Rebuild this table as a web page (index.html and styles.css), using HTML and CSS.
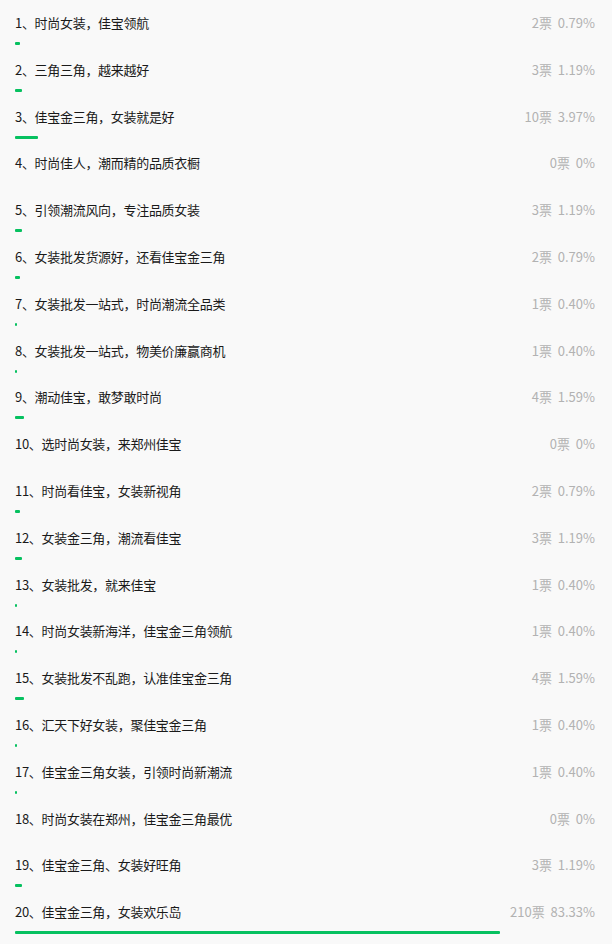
FILE: index.html
```html
<!DOCTYPE html>
<html lang="zh-CN">
<head>
  <meta charset="UTF-8" />
  <title>投票结果</title>
  <link rel="stylesheet" href="styles.css">
</head>
<body>
  <div class="vote-list">
    <div class="vote-item">
      <div class="vote-row"><span class="vote-title">1、时尚女装，佳宝领航</span><span class="vote-count">2票&nbsp;&nbsp;0.79%</span></div>
      <div class="vote-bar"><div class="vote-fill" style="width: 0.79%"></div></div>
    </div>
    <div class="vote-item">
      <div class="vote-row"><span class="vote-title">2、三角三角，越来越好</span><span class="vote-count">3票&nbsp;&nbsp;1.19%</span></div>
      <div class="vote-bar"><div class="vote-fill" style="width: 1.19%"></div></div>
    </div>
    <div class="vote-item">
      <div class="vote-row"><span class="vote-title">3、佳宝金三角，女装就是好</span><span class="vote-count">10票&nbsp;&nbsp;3.97%</span></div>
      <div class="vote-bar"><div class="vote-fill" style="width: 3.97%"></div></div>
    </div>
    <div class="vote-item">
      <div class="vote-row"><span class="vote-title">4、时尚佳人，潮而精的品质衣橱</span><span class="vote-count">0票&nbsp;&nbsp;0%</span></div>
      <div class="vote-bar"></div>
    </div>
    <div class="vote-item">
      <div class="vote-row"><span class="vote-title">5、引领潮流风向，专注品质女装</span><span class="vote-count">3票&nbsp;&nbsp;1.19%</span></div>
      <div class="vote-bar"><div class="vote-fill" style="width: 1.19%"></div></div>
    </div>
    <div class="vote-item">
      <div class="vote-row"><span class="vote-title">6、女装批发货源好，还看佳宝金三角</span><span class="vote-count">2票&nbsp;&nbsp;0.79%</span></div>
      <div class="vote-bar"><div class="vote-fill" style="width: 0.79%"></div></div>
    </div>
    <div class="vote-item">
      <div class="vote-row"><span class="vote-title">7、女装批发一站式，时尚潮流全品类</span><span class="vote-count">1票&nbsp;&nbsp;0.40%</span></div>
      <div class="vote-bar"><div class="vote-fill" style="width: 0.40%"></div></div>
    </div>
    <div class="vote-item">
      <div class="vote-row"><span class="vote-title">8、女装批发一站式，物美价廉赢商机</span><span class="vote-count">1票&nbsp;&nbsp;0.40%</span></div>
      <div class="vote-bar"><div class="vote-fill" style="width: 0.40%"></div></div>
    </div>
    <div class="vote-item">
      <div class="vote-row"><span class="vote-title">9、潮动佳宝，敢梦敢时尚</span><span class="vote-count">4票&nbsp;&nbsp;1.59%</span></div>
      <div class="vote-bar"><div class="vote-fill" style="width: 1.59%"></div></div>
    </div>
    <div class="vote-item">
      <div class="vote-row"><span class="vote-title">10、选时尚女装，来郑州佳宝</span><span class="vote-count">0票&nbsp;&nbsp;0%</span></div>
      <div class="vote-bar"></div>
    </div>
    <div class="vote-item">
      <div class="vote-row"><span class="vote-title">11、时尚看佳宝，女装新视角</span><span class="vote-count">2票&nbsp;&nbsp;0.79%</span></div>
      <div class="vote-bar"><div class="vote-fill" style="width: 0.79%"></div></div>
    </div>
    <div class="vote-item">
      <div class="vote-row"><span class="vote-title">12、女装金三角，潮流看佳宝</span><span class="vote-count">3票&nbsp;&nbsp;1.19%</span></div>
      <div class="vote-bar"><div class="vote-fill" style="width: 1.19%"></div></div>
    </div>
    <div class="vote-item">
      <div class="vote-row"><span class="vote-title">13、女装批发，就来佳宝</span><span class="vote-count">1票&nbsp;&nbsp;0.40%</span></div>
      <div class="vote-bar"><div class="vote-fill" style="width: 0.40%"></div></div>
    </div>
    <div class="vote-item">
      <div class="vote-row"><span class="vote-title">14、时尚女装新海洋，佳宝金三角领航</span><span class="vote-count">1票&nbsp;&nbsp;0.40%</span></div>
      <div class="vote-bar"><div class="vote-fill" style="width: 0.40%"></div></div>
    </div>
    <div class="vote-item">
      <div class="vote-row"><span class="vote-title">15、女装批发不乱跑，认准佳宝金三角</span><span class="vote-count">4票&nbsp;&nbsp;1.59%</span></div>
      <div class="vote-bar"><div class="vote-fill" style="width: 1.59%"></div></div>
    </div>
    <div class="vote-item">
      <div class="vote-row"><span class="vote-title">16、汇天下好女装，聚佳宝金三角</span><span class="vote-count">1票&nbsp;&nbsp;0.40%</span></div>
      <div class="vote-bar"><div class="vote-fill" style="width: 0.40%"></div></div>
    </div>
    <div class="vote-item">
      <div class="vote-row"><span class="vote-title">17、佳宝金三角女装，引领时尚新潮流</span><span class="vote-count">1票&nbsp;&nbsp;0.40%</span></div>
      <div class="vote-bar"><div class="vote-fill" style="width: 0.40%"></div></div>
    </div>
    <div class="vote-item">
      <div class="vote-row"><span class="vote-title">18、时尚女装在郑州，佳宝金三角最优</span><span class="vote-count">0票&nbsp;&nbsp;0%</span></div>
      <div class="vote-bar"></div>
    </div>
    <div class="vote-item">
      <div class="vote-row"><span class="vote-title">19、佳宝金三角、女装好旺角</span><span class="vote-count">3票&nbsp;&nbsp;1.19%</span></div>
      <div class="vote-bar"><div class="vote-fill" style="width: 1.19%"></div></div>
    </div>
    <div class="vote-item">
      <div class="vote-row"><span class="vote-title">20、佳宝金三角，女装欢乐岛</span><span class="vote-count">210票&nbsp;&nbsp;83.33%</span></div>
      <div class="vote-bar"><div class="vote-fill" style="width: 83.33%"></div></div>
    </div>
  </div>
</body>
</html>
```

FILE: styles.css
```css
html {
  background: #fff;
}
body {
  margin: 0;
  font-family: "Noto Sans CJK SC", "Liberation Sans", sans-serif;
  font-size: 13px;
  color: #1a1a1a;
}
.vote-list {
  width: 612px;
  box-sizing: border-box;
  padding: 0 15px 0 15px;
  background: #f9f9f9;
  min-height: 944px;
}
.vote-item {
  height: 46.8px;
  padding-top: 13px;
  box-sizing: border-box;
}
.vote-row {
  display: flex;
  justify-content: space-between;
  line-height: 20px;
  height: 20px;
}
.vote-title {
  letter-spacing: -0.3px;
}
.vote-count {
  color: #b2b2b2;
  padding-right: 2px;
}
.vote-bar {
  margin-top: 9px;
  height: 3px;
}
.vote-fill {
  height: 3px;
  background: #07c160;
  border-radius: 1px;
}
```
